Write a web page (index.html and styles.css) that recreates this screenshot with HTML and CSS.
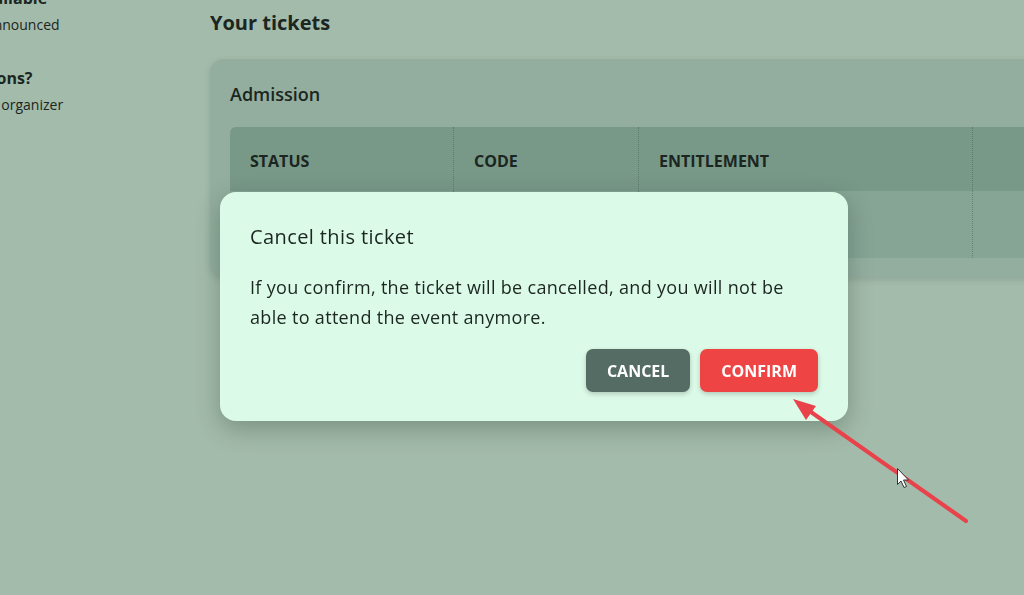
FILE: index.html
```html
<!doctype html>
<html>
<head>
    <title>Your tickets</title>
    <link rel="stylesheet" href="styles.css">
</head>
<body>
    <div class="page">
        <aside class="sidebar">
            <div class="side-block">
                <h3>Tickets available</h3>
                <p>Start to be announced</p>
            </div>
            <div class="side-block">
                <h3>Got questions?</h3>
                <p>Contact your organizer</p>
            </div>
        </aside>
        <main class="content">
            <h1>Your tickets</h1>
            <section class="card">
                <h2>Admission</h2>
                <table class="tickets">
                    <thead>
                        <tr>
                            <th class="col-status">Status</th>
                            <th class="col-code">Code</th>
                            <th class="col-entitlement">Entitlement</th>
                            <th class="col-actions"></th>
                        </tr>
                    </thead>
                    <tbody>
                        <tr>
                            <td></td>
                            <td></td>
                            <td></td>
                            <td></td>
                        </tr>
                    </tbody>
                </table>
            </section>
        </main>
    </div>

    <!-- confirmation dialog -->
    <div class="backdrop">
        <div class="dialog">
            <h2 class="dialog-title">Cancel this ticket</h2>
            <p class="dialog-text">If you confirm, the ticket will be cancelled, and you will not be able to attend the event anymore.</p>
            <div class="dialog-actions">
                <button class="btn btn-cancel">Cancel</button>
                <button class="btn btn-confirm">Confirm</button>
            </div>
        </div>
    </div>

    <!-- screenshot annotation: arrow and mouse pointer -->
    <svg class="annotation" width="1024" height="595" viewBox="0 0 1024 595">
        <line x1="966" y1="521" x2="801" y2="405" stroke="#e8424a" stroke-width="4" stroke-linecap="round"/>
        <polygon points="793,399 816,406 806,420" fill="#e8424a"/>
        <path d="M897.5 468.5 L897.5 484.5 L901 481 L904 487.5 L906.5 486.5 L903.5 480 L908.5 480 Z" fill="#fff" stroke="#333" stroke-width="1" stroke-linejoin="round"/>
    </svg>
</body>
</html>
```

FILE: styles.css
```css
    html, body {
        margin: 0;
        height: 100%;
        overflow: hidden;
    }
    body {
        font-family: "Open Sans", "Noto Sans", sans-serif;
        color: #1b2621;
        background-color: #a3bbab;
    }
    .page {
        display: flex;
        align-items: flex-start;
    }
    .sidebar {
        flex: none;
        width: 220px;
        margin-left: -86px;
        margin-top: -15px;
    }
    .side-block {
        margin-bottom: 26px;
    }
    .side-block h3 {
        margin: 0;
        font-size: 16px;
        line-height: 26px;
        font-weight: 700;
    }
    .side-block p {
        margin: 0;
        font-size: 14px;
        line-height: 28px;
    }
    .content {
        flex: none;
        width: 1000px;
        margin-left: 76px;
    }
    .content h1 {
        margin: 9px 0 22px;
        font-size: 20px;
        line-height: 28px;
        font-weight: 700;
    }
    .card {
        background-color: #93ae9f;
        border-radius: 14px;
        padding: 22px 20px 20px;
        box-shadow: 0 2px 6px rgba(40, 60, 50, 0.15);
    }
    .card h2 {
        margin: 0 0 20px;
        font-size: 18px;
        line-height: 26px;
        font-weight: 600;
    }
    .tickets {
        width: 100%;
        border-collapse: separate;
        border-spacing: 0;
        border-radius: 6px 6px 0 0;
        overflow: hidden;
        table-layout: fixed;
    }
    .tickets th,
    .tickets td {
        box-sizing: border-box;
        text-align: left;
        padding: 3px 20px 0;
        border-left: 1px dotted rgba(60, 90, 75, 0.45);
    }
    .tickets th:first-child,
    .tickets td:first-child {
        border-left: none;
    }
    .tickets th {
        height: 64px;
        background-color: #789888;
        font-size: 16px;
        font-weight: 700;
        text-transform: uppercase;
    }
    .tickets td {
        height: 67px;
        background-color: #86a595;
        font-size: 16px;
    }
    .col-status { width: 223px; }
    .col-code { width: 185px; }
    .col-entitlement { width: 334px; }

    .backdrop {
        position: fixed;
        inset: 0;
    }
    .dialog {
        position: absolute;
        left: 220px;
        top: 192px;
        width: 628px;
        box-sizing: border-box;
        padding: 30px 30px 29px;
        background-color: #dcfae8;
        border-radius: 16px;
        box-shadow: 0 8px 24px rgba(30, 50, 40, 0.3);
    }
    .dialog-title {
        margin: 0 0 20px;
        font-size: 20px;
        line-height: 30px;
        font-weight: 400;
        letter-spacing: 0.4px;
    }
    .dialog-text {
        margin: 0 0 17px;
        font-size: 18px;
        line-height: 30px;
        letter-spacing: 0.32px;
    }
    .dialog-actions {
        display: flex;
        justify-content: flex-end;
        gap: 10px;
    }
    .btn {
        height: 43px;
        padding: 0 21px;
        border: none;
        border-radius: 7px;
        font-family: inherit;
        font-size: 16px;
        font-weight: 700;
        color: #fff;
        text-transform: uppercase;
        box-shadow: 0 2px 5px rgba(0, 0, 0, 0.2);
        cursor: pointer;
    }
    .btn-cancel {
        background-color: #546c64;
    }
    .btn-confirm {
        background-color: #ef4444;
    }
    .annotation {
        position: fixed;
        left: 0;
        top: 0;
        pointer-events: none;
    }
```
